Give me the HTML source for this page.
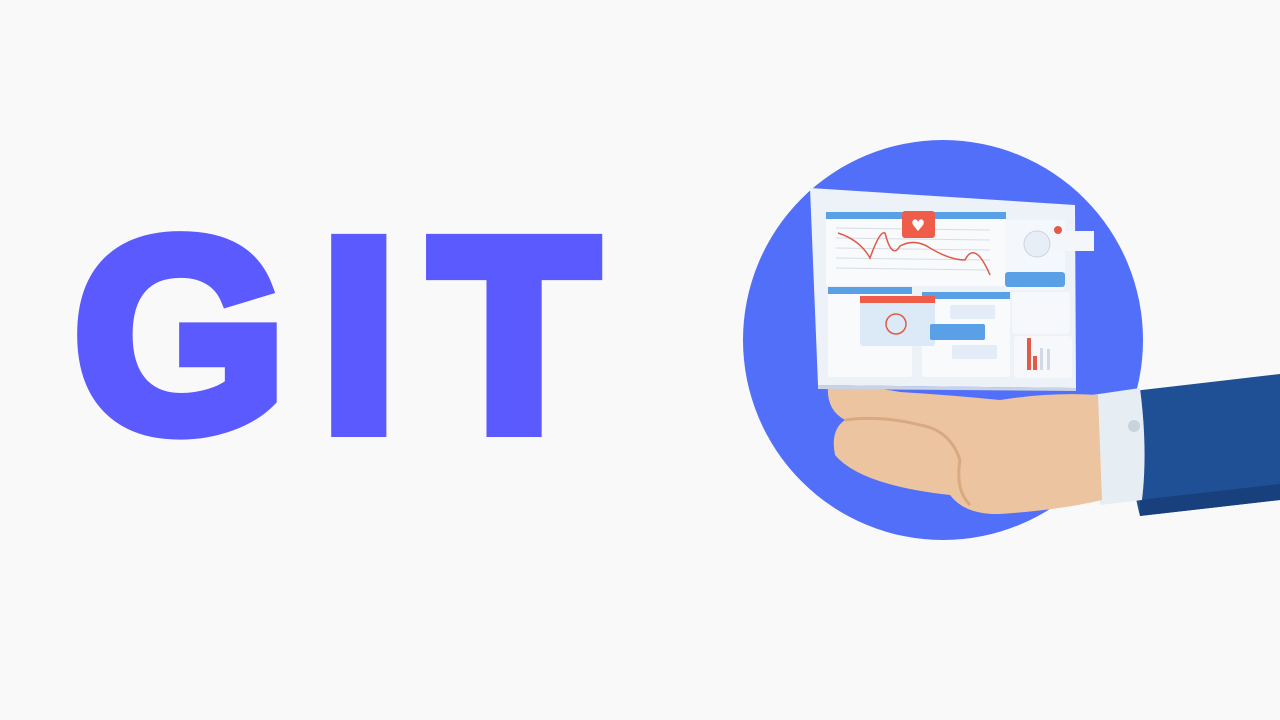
<!DOCTYPE html>
<html><head><meta charset="utf-8"><style>
html,body{margin:0;padding:0;width:1280px;height:720px;background:#f9f9f9;overflow:hidden}
.t{position:absolute;top:199px;font-family:"Liberation Sans",sans-serif;font-weight:bold;font-size:272px;line-height:1;color:#5a5aff;-webkit-text-stroke:16px #5a5aff;margin:0}
svg{position:absolute;left:0;top:0}
</style></head><body>
<svg width="1280" height="720" viewBox="0 0 1280 720">
<circle cx="943" cy="340" r="200" fill="#516ff9"/>
<path d="M1125 392 L1280 374 L1280 500 L1140 516 Q1128 470 1125 392Z" fill="#1f4f94"/>
<path d="M1140 500 L1280 484 L1280 500 L1140 516Z" fill="#17407c"/>
<path d="M1092 395 L1140 388 Q1148 450 1142 500 L1100 505 Q1090 450 1092 395Z" fill="#e6edf3"/>
<circle cx="1134" cy="426" r="6" fill="#c9d3dc"/>
<path d="M828 385 Q826 410 845 420 Q830 430 835 455 Q860 485 950 495 Q965 515 1000 514 Q1060 510 1102 500 L1098 395 Q1050 392 1000 400 Q950 395 900 392 Q860 385 828 385Z" fill="#ecc4a0"/>
<path d="M845 420 Q880 415 920 425 Q950 430 960 460" fill="none" stroke="#d9aa82" stroke-width="3"/>
<path d="M960 460 Q955 490 970 505" fill="none" stroke="#d9aa82" stroke-width="3"/>
<path d="M810 188 L1075 205 L1076 388 L818 385Z" fill="#edf2f9"/>
<path d="M818 385 L1076 388 L1076 391 L818 389Z" fill="#c8d3e3"/>
<rect x="826" y="212" width="180" height="74" rx="3" fill="#f8fafc"/>
<rect x="826" y="212" width="180" height="7" fill="#5aa0e6"/>
<g stroke="#d6dde8" stroke-width="1">
<line x1="836" y1="228" x2="990" y2="230"/><line x1="836" y1="238" x2="990" y2="240"/><line x1="836" y1="248" x2="990" y2="250"/><line x1="836" y1="258" x2="990" y2="260"/><line x1="836" y1="268" x2="990" y2="270"/>
</g>
<path d="M838 233 Q860 240 870 258 Q880 230 885 233 Q892 260 900 246 Q915 238 930 248 Q950 260 965 260 Q975 240 990 275" fill="none" stroke="#e05a4a" stroke-width="1.5"/>
<rect x="902" y="211" width="33" height="27" rx="3" fill="#ef5d4a"/>
<text x="918" y="231" font-size="16" fill="#fff" text-anchor="middle" font-family="DejaVu Sans">♥</text>
<rect x="1005" y="220" width="60" height="70" rx="3" fill="#f4f7fb"/>
<circle cx="1037" cy="244" r="13" fill="#e8eef6" stroke="#c9d4e2"/>
<rect x="1005" y="272" width="60" height="15" rx="3" fill="#5aa0e6"/>
<rect x="1052" y="231" width="42" height="20" fill="#f4f6f9"/>
<circle cx="1058" cy="230" r="4" fill="#e45a48"/>
<rect x="828" y="287" width="84" height="90" rx="3" fill="#f8fafc"/>
<rect x="828" y="287" width="84" height="7" fill="#5aa0e6"/>
<rect x="922" y="292" width="88" height="85" rx="3" fill="#f8fafc"/>
<rect x="922" y="292" width="88" height="7" fill="#5aa0e6"/>
<rect x="860" y="296" width="75" height="50" rx="3" fill="#dce9f7"/>
<rect x="860" y="296" width="75" height="7" fill="#ef5d4a"/>
<circle cx="896" cy="324" r="10" fill="none" stroke="#e05a4a" stroke-width="1.5"/>
<rect x="930" y="324" width="55" height="16" rx="2" fill="#5aa0e6"/>
<rect x="950" y="305" width="45" height="14" rx="2" fill="#e4edf7"/>
<rect x="952" y="345" width="45" height="14" rx="2" fill="#e4edf7"/>
<rect x="1012" y="292" width="58" height="42" rx="3" fill="#f6f8fb"/>
<rect x="1014" y="336" width="58" height="42" rx="3" fill="#f6f8fb"/>
<rect x="1027" y="338" width="4" height="32" fill="#e45a48"/>
<rect x="1033" y="356" width="4" height="14" fill="#e45a48"/>
<rect x="1040" y="348" width="3" height="22" fill="#d0d9e6"/>
<rect x="1047" y="349" width="3" height="21" fill="#d0d9e6"/>
</svg>
<div class="t" style="left:74px">G</div>
<div class="t" style="left:321px">I</div>
<div class="t" style="left:431px">T</div>
</body></html>
